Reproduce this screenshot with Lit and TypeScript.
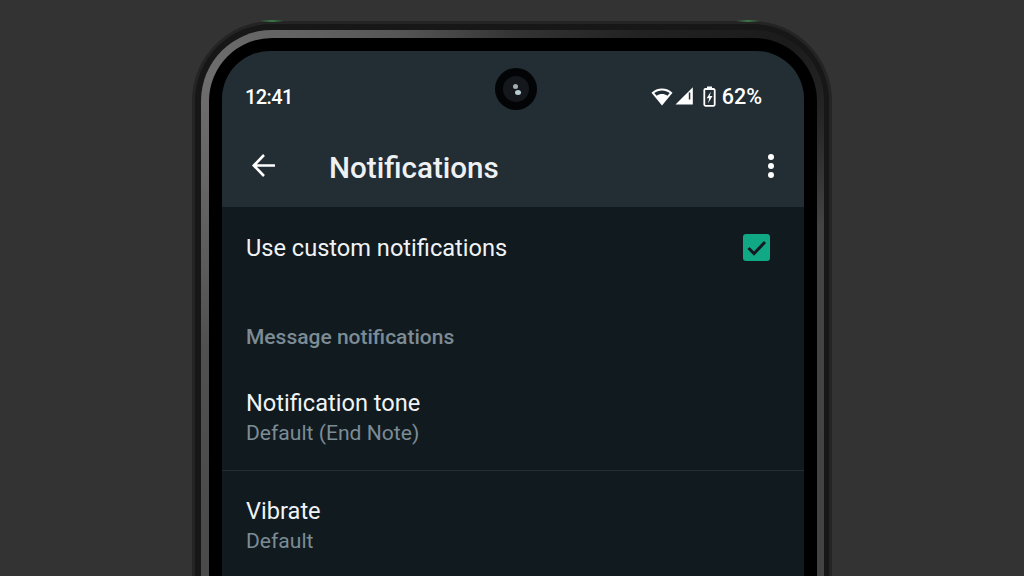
import { LitElement, html, css } from "lit";
import { customElement } from "lit/decorators.js";

@customElement("app-root")
export class AppRoot extends LitElement {
  static styles = css`
    :host {
      display: block;
      width: 1024px;
      height: 576px;
      overflow: hidden;
      background: #333333;
      font-family: Roboto, "Liberation Sans", sans-serif;
      -webkit-font-smoothing: antialiased;
    }
    .stage { padding: 21px 0 0 192px; }
    .body-shell {
      position: relative;
      width: 640px;
      height: 640px;
      box-sizing: border-box;
      padding: 3px 3px 0 3px;
      border-radius: 80px 80px 0 0;
      background: #242424;
    }
    .accent {
      position: absolute;
      top: -1px;
      height: 1.5px;
      width: 24px;
      background: linear-gradient(90deg, transparent, #3a7a48, transparent);
    }
    .accent.l { left: 68px; }
    .accent.r { right: 72px; }
    .band {
      padding: 6px 5px 0 6px;
      height: 100%;
      box-sizing: border-box;
      border-radius: 77px 77px 0 0;
      background: #171717;
    }
    .metal {
      height: 100%;
      box-sizing: border-box;
      padding: 8px 7px 0 8px;
      border-radius: 71px 71px 0 0;
      background: conic-gradient(from 0deg at 50% 320px,
        #343434 0deg, #222222 22deg, #1b1b1b 42deg, #242424 52deg, #444444 68deg, #424242 180deg,
        #505050 270deg, #6e6e6e 312deg, #565656 340deg, #343434 360deg);
    }
    .bezel {
      height: 100%;
      box-sizing: border-box;
      padding: 13px 13px 0 13px;
      border-radius: 63px 63px 0 0;
      background: #000;
    }
    .screen {
      position: relative;
      height: 100%;
      border-radius: 48px 48px 0 0;
      overflow: hidden;
      background: #111a1f;
      color: #fff;
    }
    .appbar {
      height: 156px;
      background: #222d34;
      display: flex;
      flex-direction: column;
    }
    .status {
      height: 90px;
      box-sizing: border-box;
      padding: 0 42px 0 23px;
      display: flex;
      align-items: center;
      justify-content: space-between;
      flex: none;
    }
    .time { font-size: 20px; font-weight: 500; letter-spacing: -0.6px; color: #fff; position: relative; top: 1px; }
    .status-right { display: flex; align-items: center; font-size: 21.5px; font-weight: 500; }
    .status-right svg { display: block; flex: none; }
    .wifi { margin-right: 2px; }
    .sig { margin-right: 10px; }
    .bat { margin-right: 6px; }
    .toolbar {
      flex: 1;
      display: flex;
      align-items: center;
      padding: 0 30px 13px 28px;
    }
    .back { flex: none; display: block; margin: -4px 53px 0 0; }
    .title { flex: 1; font-size: 29.6px; font-weight: 500; color: #eef1f3; }
    .dots { display: flex; flex-direction: column; gap: 2.5px; margin-top: -3px; }
    .dots i { display: block; width: 6.5px; height: 6.5px; border-radius: 50%; background: #fff; }
    .camera {
      position: absolute;
      left: 273px;
      top: 17px;
      width: 42px;
      height: 42px;
      border-radius: 50%;
      background: #030405;
      display: flex;
      align-items: center;
      justify-content: center;
    }
    .lens {
      position: relative;
      width: 26px;
      height: 26px;
      border-radius: 50%;
      background: #14181c;
    }
    .glint1, .glint2 { position: absolute; border-radius: 50%; }
    .glint1 { left: 9.5px; top: 7.5px; width: 5px; height: 5px; background: #a4adb1; }
    .glint2 { left: 11.5px; top: 13.5px; width: 6px; height: 5px; background: #b9ced2; }
    .row-check {
      height: 82px;
      box-sizing: border-box;
      padding: 0 34px 0 24px;
      display: flex;
      align-items: center;
      justify-content: space-between;
    }
    .t { font-size: 23.6px; line-height: 30px; color: #f0f3f5; }
    .check {
      width: 27px;
      height: 27px;
      margin-top: -2px;
      border-radius: 3px;
      background: #10a885;
      display: block;
    }
    .section {
      padding: 34px 24px 0 24px;
      height: 65px;
      font-size: 21px;
      line-height: 28px;
      font-weight: 500;
      color: #7c8c95;
    }
    .item { padding: 0 24px; }
    .s { font-size: 21.1px; line-height: 30px; color: #7c8c95; }
    .item.first { height: 82px; }
    .sep { height: 1px; background: #232d34; }
    .item.second { padding-top: 25px; }
  `;

  render() {
    return html`
      <div class="stage">
        <div class="body-shell">
          <span class="accent l"></span><span class="accent r"></span>
          <div class="band">
            <div class="metal">
              <div class="bezel">
                <div class="screen">
                  <div class="appbar">
                    <div class="status">
                      <span class="time">12:41</span>
                      <div class="status-right">
                        <svg class="wifi" width="22" height="20" viewBox="0 0 22 20">
                          <path fill="#fff" d="M0.500 6.800C3.300 4 7 2.500 11 2.500s7.700 1.500 10.500 4.300L11 19.500z"/>
                          <path fill="#222d34" d="M3.300 7C5.400 5.300 8.100 4.400 11 4.400s5.600 0.900 7.700 2.600l-2.300 2.800C14.900 8.600 13 8 11 8S7.100 8.600 5.600 9.800z"/>
                        </svg>
                        <svg class="sig" width="18" height="18" viewBox="0 0 18 18">
                          <path fill="#fff" d="M17.800 0.300V17.500H0.500z"/>
                          <path fill="#222d34" d="M13.800 5.500h1.500v7h-1.500z"/>
                        </svg>
                        <svg class="bat" width="13" height="21" viewBox="0 0 13 21">
                          <path fill="none" stroke="#fff" stroke-width="1.800" stroke-linejoin="round" d="M2.500 3h8a1.200 1.200 0 0 1 1.200 1.200v14.400a1.200 1.200 0 0 1-1.200 1.200h-8a1.200 1.200 0 0 1-1.200-1.200V4.200A1.200 1.200 0 0 1 2.500 3z"/>
                          <path fill="#fff" d="M4 0.500h5v3H4zM8 5.500 3.600 12.300h2.600l-1.200 5.200 4.500-7.400H6.700z"/>
                        </svg>
                        <span>62%</span>
                      </div>
                    </div>
                    <div class="toolbar">
                      <svg class="back" width="26" height="26" viewBox="0 0 26 26">
                        <path fill="none" stroke="#fff" stroke-width="2.600" d="M25 12.500H3.800M14 2 3.800 12.500 14 23"/>
                      </svg>
                      <span class="title">Notifications</span>
                      <div class="dots"><i></i><i></i><i></i></div>
                    </div>
                  </div>
                  <div class="camera">
                    <div class="lens"><span class="glint1"></span><span class="glint2"></span></div>
                  </div>
                  <div class="row-check">
                    <span class="t">Use custom notifications</span>
                    <svg class="check" viewBox="0 0 27 27">
                      <path fill="none" stroke="#121b22" stroke-width="3" d="M5.500 14l5.500 5.500L22 8"/>
                    </svg>
                  </div>
                  <div class="section">Message notifications</div>
                  <div class="item first">
                    <div class="t">Notification tone</div>
                    <div class="s">Default (End Note)</div>
                  </div>
                  <div class="sep"></div>
                  <div class="item second">
                    <div class="t">Vibrate</div>
                    <div class="s">Default</div>
                  </div>
                </div>
              </div>
            </div>
          </div>
        </div>
      </div>
    `;
  }
}
